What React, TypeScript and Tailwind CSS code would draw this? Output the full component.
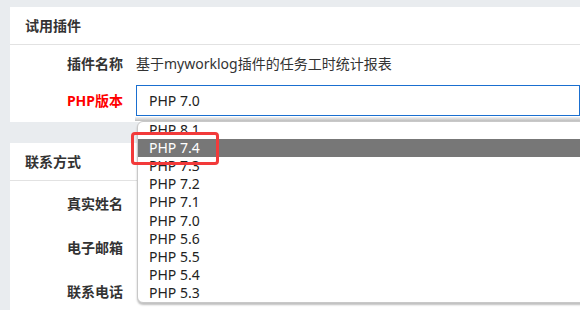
import React from "react";

const font = { fontFamily: '"Noto Sans", "Noto Sans CJK SC", sans-serif' };

const options = ["PHP 8.1", "PHP 7.4", "PHP 7.3", "PHP 7.2", "PHP 7.1", "PHP 7.0", "PHP 5.6", "PHP 5.5", "PHP 5.4", "PHP 5.3"];

function Label({ children, red }: { children: React.ReactNode; red?: boolean }) {
  return (
    <div className={`w-[126px] shrink-0 pr-[13px] text-right text-[14px] font-bold ${red ? "text-[#ff0000]" : "text-[#333]"}`}>
      {children}
    </div>
  );
}

export default function App() {
  return (
    <div style={font} className="relative h-[310px] w-[580px] overflow-hidden bg-[#e9ecef] pl-[10px] pt-[7px] text-[#333]">
      <div className="bg-white">
        <div className="flex h-[38px] items-center border-b border-[#e2e2e2] px-[15px] text-[14px] font-bold">试用插件</div>
        <div className="flex h-[36px] items-center pt-[1px]">
          <Label>插件名称</Label>
          <div className="text-[14px] text-[#333]">基于myworklog插件的任务工时统计报表</div>
        </div>
        <div className="flex h-[41px] items-start pt-[4px]">
          <div className="flex h-[31px] items-center">
            <Label red>PHP版本</Label>
          </div>
          <div className="flex h-[31px] flex-1 items-center border border-[#1a6fd0] bg-white pl-[12px] text-[14px] text-[#222]">PHP 7.0</div>
        </div>
      </div>

      <div className="mt-[21px] bg-white">
        <div className="flex h-[38px] items-center border-b border-[#e2e2e2] px-[15px] text-[14px] font-bold">联系方式</div>
        <div className="flex h-[44px] items-center">
          <Label>真实姓名</Label>
        </div>
        <div className="flex h-[44px] items-center">
          <Label>电子邮箱</Label>
        </div>
        <div className="flex h-[44px] items-center">
          <Label>联系电话</Label>
        </div>
      </div>

      <div className="absolute left-[135px] top-[117px] h-[4px] w-[460px] bg-gradient-to-b from-[#f2f2f2] to-[#bdbdbd]" />
      <div className="absolute left-[137px] top-[121px] h-[182px] w-[460px] overflow-hidden rounded-l-[6px] border border-[#c8c8c8] bg-white shadow-[0_2px_2px_rgba(0,0,0,0.25)]">
        <div className="-mt-[1px]">
          {options.map((o, i) => (
            <div
              key={o}
              className={`flex h-[18.1px] items-center pl-[11px] text-[14px] leading-none ${i === 1 ? "bg-[#777777] text-white" : "text-[#222]"}`}
            >
              {o}
            </div>
          ))}
        </div>
      </div>
      <div className="absolute left-[131px] top-[132px] h-[33px] w-[88px] rounded-[4px] border-[3px] border-[#f23a3a]" />
    </div>
  );
}
